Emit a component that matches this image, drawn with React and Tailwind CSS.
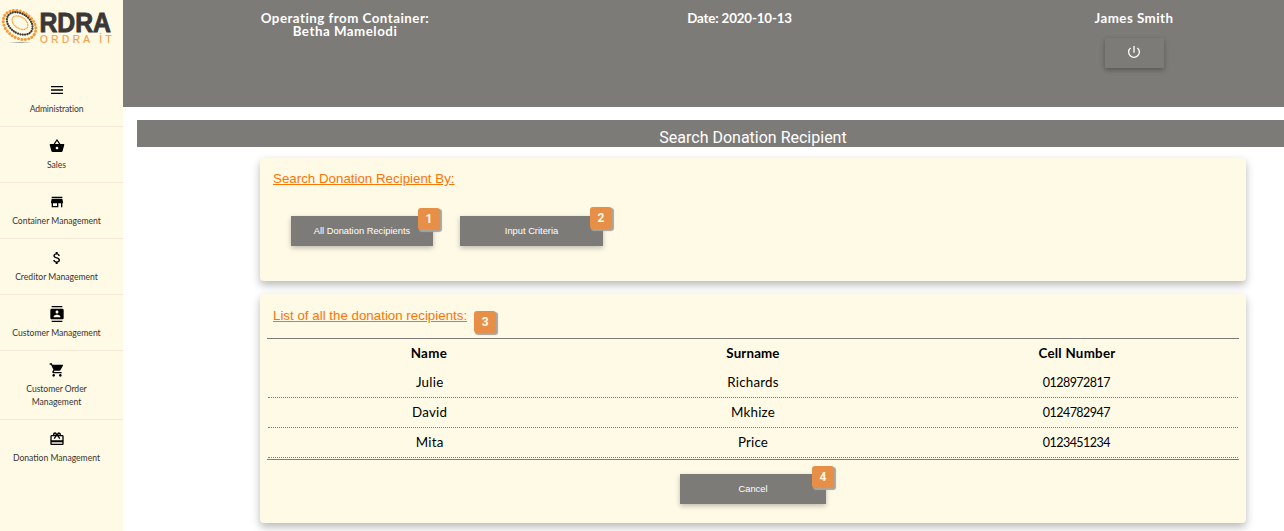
import {
  MdMenu,
  MdShoppingBasket,
  MdStore,
  MdAttachMoney,
  MdContacts,
  MdShoppingCart,
  MdCardGiftcard,
  MdPowerSettingsNew,
} from 'react-icons/md';

const navItems = [
  { icon: MdMenu, lines: [['Administration', '-tracking-[0.12px]']] },
  { icon: MdShoppingBasket, lines: [['Sales', 'tracking-[0px]']] },
  { icon: MdStore, lines: [['Container Management', 'tracking-[0px]']] },
  { icon: MdAttachMoney, lines: [['Creditor Management', 'tracking-[0px]']] },
  { icon: MdContacts, lines: [['Customer Management', 'tracking-[0px]']] },
  {
    icon: MdShoppingCart,
    lines: [
      ['Customer Order', '-tracking-[0.05px]'],
      ['Management', 'tracking-[0px]'],
    ],
  },
  { icon: MdCardGiftcard, lines: [['Donation Management', 'tracking-[0px]']] },
];

const columns = [
  ['Name', 'tracking-[0.4px]'],
  ['Surname', 'tracking-[0.15px]'],
  ['Cell Number', 'tracking-[0.27px]'],
];

const recipients = [
  ['Julie', 'Richards', '0128972817'],
  ['David', 'Mkhize', '0124782947'],
  ['Mita', 'Price', '0123451234'],
];

const cellStyles = ['tracking-[0.25px]', 'tracking-[0.2px]', 'text-[12.5px] tracking-[-0.55px]'];

function Logo() {
  return (
    <svg className="block h-[46px] w-[123px]" viewBox="0 0 123 46">
      <defs>
        <radialGradient id="shade">
          <stop offset="0" stopColor="#8a8780" stopOpacity="0.8" />
          <stop offset="1" stopColor="#8a8780" stopOpacity="0" />
        </radialGradient>
      </defs>
      <ellipse cx="20" cy="42.5" rx="12" ry="1" fill="url(#shade)" />
      <g fill="none" strokeLinecap="round" transform="rotate(34 19.5 25)">
        <ellipse cx="19.5" cy="25" rx="17.6" ry="12.9" stroke="#f79a33" strokeWidth="3" strokeDasharray="0.1 3.3" />
        <ellipse cx="18.8" cy="23.6" rx="14" ry="9.8" stroke="#3f3c38" strokeWidth="2.2" strokeDasharray="0.1 2.3" />
        <ellipse cx="18.6" cy="22.8" rx="8.8" ry="5.6" stroke="#f5a54b" strokeWidth="1.4" strokeDasharray="0.1 1.5" />
      </g>
      <text x="39.5" y="32" textLength="71.5" lengthAdjust="spacingAndGlyphs" fill="#3a3836" stroke="#3a3836" strokeWidth="0.9" className="font-['Liberation_Sans',sans-serif] text-[27px] leading-none font-bold">RDRA</text>
      <text x="40" y="42.5" textLength="71.5" fill="#f5a04a" stroke="#f5a04a" strokeWidth="0.2" className="font-['Liberation_Sans',sans-serif] text-[10px] leading-none">ORDRA İT</text>
    </svg>
  );
}

function Badge({ children, className }) {
  return (
    <span className={`flex h-[22px] w-[22px] items-center justify-center rounded-[3px] bg-[#e78f47] font-['Roboto',sans-serif] text-[12px] font-bold text-[#fff9e8] shadow-[1.5px_1.5px_1px_#a8a59d] ${className}`}>
      {children}
    </span>
  );
}

function ActionButton({ children, badge, badgeClass, className }) {
  return (
    <button className={`relative h-[30px] bg-[#7d7b77] pt-[2px] font-['Liberation_Sans',Arial,sans-serif] text-[9.33px] text-white shadow-[0_2px_5px_rgba(0,0,0,0.25)] ${className}`}>
      {children}
      <Badge className={`absolute ${badgeClass}`}>{badge}</Badge>
    </button>
  );
}

function SectionTitle({ children }) {
  return (
    <h2 className="font-['Liberation_Sans',Arial,sans-serif] text-[13.33px] leading-4 text-[#fb7406] underline">{children}</h2>
  );
}

export default function App() {
  return (
    <div className="flex h-[531px] w-[1284px] overflow-hidden bg-white font-['Lato',sans-serif]">
      <aside className="w-[123px] shrink-0 bg-[#fffae6]">
        <Logo />
        <nav className="pt-[25px]">
          {navItems.map(({ icon: Icon, lines }) => (
            <a key={lines[0][0]} className="flex flex-col items-center border-b border-[#f5e9d8] pt-[11px] pr-[10px] pb-[10px] text-[8.6px] leading-[13px] text-[#37342f] last:border-b-0">
              <Icon className="mb-[5px] h-4 w-4 text-black" />
              {lines.map(([text, tracking]) => (
                <span key={text} className={tracking}>{text}</span>
              ))}
            </a>
          ))}
        </nav>
      </aside>

      <div className="min-w-0 flex-1 overflow-hidden">
        <header className="grid h-[107px] grid-cols-[394px_395px_394px] overflow-hidden bg-[#7d7b77] pt-[12px] pl-[25px] text-center text-[13.33px] leading-[13px] font-bold text-white">
          <div>
            <p className="tracking-[0.48px]">Operating from Container:</p>
            <p className="tracking-[0.5px]">Betha Mamelodi</p>
          </div>
          <p className="tracking-[-0.15px]">Date: 2020-10-13</p>
          <div className="flex flex-col items-center">
            <p className="tracking-[0.45px]">James Smith</p>
            <button className="mt-[13px] flex h-[30px] w-[59px] items-center justify-center bg-[#7d7b77] pb-[3px] shadow-[0_2px_5px_rgba(0,0,0,0.3)]">
              <MdPowerSettingsNew className="h-4 w-4" />
            </button>
          </div>
        </header>

        <main className="pt-[13px] pl-[14px]">
          <h1 className="h-[27px] bg-[#7d7b77] pt-[8px] pl-[85px] text-center font-['Roboto',sans-serif] text-[16px] leading-[19px] text-white">
            Search Donation Recipient
          </h1>

          <section className="mt-[11px] ml-[123px] h-[123px] w-[986px] rounded-[4px] bg-[#fffae6] pt-[13px] pl-[13px] shadow-[0_4px_8px_rgba(0,0,0,0.28)]">
            <SectionTitle>Search Donation Recipient By:</SectionTitle>
            <div className="mt-[29px] ml-[18px] flex gap-[27px]">
              <ActionButton className="w-[142px]" badge="1" badgeClass="-top-[8px] -right-[7px]">All Donation Recipients</ActionButton>
              <ActionButton className="w-[143px]" badge="2" badgeClass="-top-[9px] -right-[9px]">Input Criteria</ActionButton>
            </div>
          </section>

          <section className="mt-[13px] ml-[123px] h-[229px] w-[986px] rounded-[4px] bg-[#fffae6] px-[7px] pt-[14px] shadow-[0_4px_8px_rgba(0,0,0,0.28)]">
            <div className="flex h-[30px] items-start gap-[7px] pl-[6px]">
              <SectionTitle>List of all the donation recipients:</SectionTitle>
              <Badge className="mt-[3px]">3</Badge>
            </div>
            <div className="h-[122px] border-y border-[#7d7b77] text-center text-[13.33px] leading-[29px] text-black">
              <div className="grid h-[29px] grid-cols-3 font-bold">
                {columns.map(([label, tracking]) => (
                  <span key={label} className={tracking}>{label}</span>
                ))}
              </div>
              {recipients.map((row) => (
                <div key={row[0]} className="mx-px grid h-[30px] grid-cols-3 border-b border-dotted border-[#7d7b77]">
                  {row.map((cell, i) => (
                    <span key={cell} className={cellStyles[i]}>{cell}</span>
                  ))}
                </div>
              ))}
            </div>
            <div className="mt-[14px] flex justify-center">
              <ActionButton className="w-[146px]" badge="4" badgeClass="-top-[8px] -right-[8px]">Cancel</ActionButton>
            </div>
          </section>
        </main>
      </div>
    </div>
  );
}
